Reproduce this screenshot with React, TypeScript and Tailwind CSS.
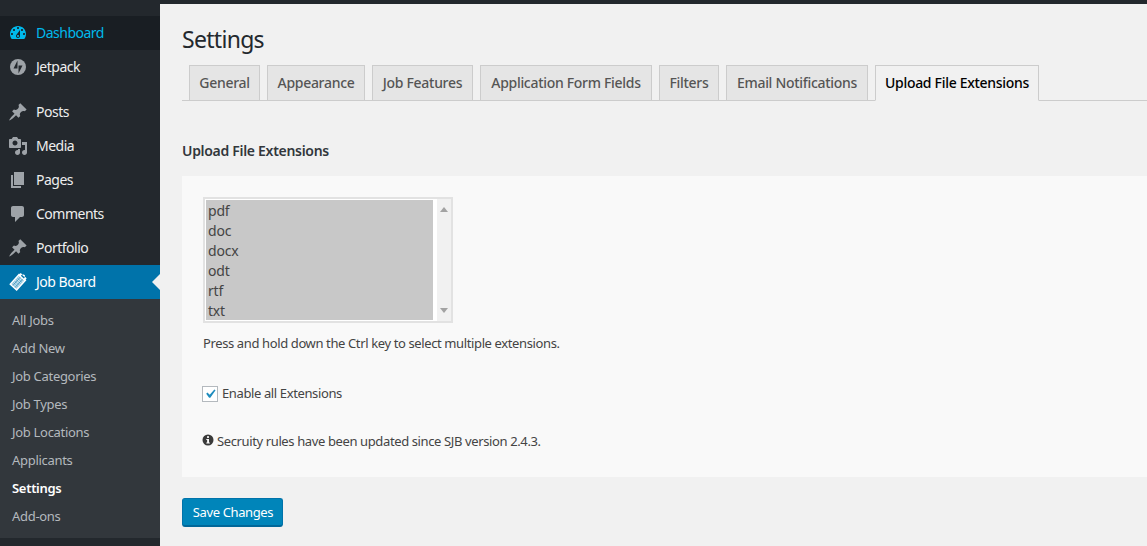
import type { ReactNode } from "react";

const Dash = ({ d, className = "" }: { d: string; className?: string }) => (
  <svg viewBox="0 0 20 20" className={`w-5 h-5 fill-current ${className}`}>
    <path d={d} fillRule="evenodd" />
  </svg>
);

const pinPath =
  "M10.44 3.02l1.82-1.82 6.36 6.35-1.83 1.82c-1.05-.68-2.48-.57-3.41.36l-.75.75c-.92.93-1.04 2.35-.35 3.41l-1.83 1.82-2.41-2.41-2.8 2.79c-.42.42-3.38 2.71-3.8 2.29s1.86-3.39 2.28-3.81l2.79-2.79L4.1 9.36l1.83-1.82c1.05.69 2.48.57 3.4-.36l.75-.75c.93-.92 1.05-2.35.36-3.41z";
const dashPath =
  "M3.76 16h12.48c1.1-1.37 1.76-3.11 1.76-5 0-4.42-3.58-8-8-8s-8 3.58-8 8c0 1.89.66 3.63 1.76 5zM10 4c.55 0 1 .45 1 1s-.45 1-1 1-1-.45-1-1 .45-1 1-1zM6 6c.55 0 1 .45 1 1s-.45 1-1 1-1-.45-1-1 .45-1 1-1zm8 0c.55 0 1 .45 1 1s-.45 1-1 1-1-.45-1-1 .45-1 1-1zm-5.37 5.55L12 7v6c0 1.1-.9 2-2 2s-2-.9-2-2c0-.57.24-1.08.63-1.45zM4 10c.55 0 1 .45 1 1s-.45 1-1 1-1-.45-1-1 .45-1 1-1zm12 0c.55 0 1 .45 1 1s-.45 1-1 1-1-.45-1-1 .45-1 1-1zm-5 3c0-.55-.45-1-1-1s-1 .45-1 1 .45 1 1 1 1-.45 1-1z";
const mediaPath =
  "M13 11V4c0-.55-.45-1-1-1h-1.67L9 1H5L3.67 3H2c-.55 0-1 .45-1 1v7c0 .55.45 1 1 1h10c.55 0 1-.45 1-1zM7 4.5c1.38 0 2.5 1.12 2.5 2.5S8.38 9.5 7 9.5 4.5 8.38 4.5 7 5.62 4.5 7 4.5zM14 6h5v10.5c0 1.38-1.12 2.5-2.5 2.5S14 17.88 14 16.5s1.12-2.5 2.5-2.5c.17 0 .34.02.5.05V9h-3V6zm-4 8.05V13h2v3.5c0 1.38-1.12 2.5-2.5 2.5S7 17.88 7 16.5 8.12 14 9.5 14c.17 0 .34.02.5.05z";
const pagesPath = "M6 15V2h10v13H6zm-1 1h8v2H3V5h2v11z";
const commentsPath =
  "M5 2h9c1.1 0 2 .9 2 2v7c0 1.1-.9 2-2 2h-2l-5 5v-5H5c-1.1 0-2-.9-2-2V4c0-1.1.9-2 2-2z";

const JetpackIcon = () => (
  <svg viewBox="0 0 32 32" className="w-4 h-4 ml-0.5">
    <circle cx="16" cy="16" r="16" fill="#9ea3a8" />
    <path d="M15 19H7l8-16v16z" fill="#23282d" />
    <path d="M17 29V13h8l-8 16z" fill="#23282d" />
  </svg>
);

const TagIcon = () => (
  <svg viewBox="0 0 20 20" className="w-5 h-5">
    <g transform="rotate(42 10 10)">
      <path d="M6 1.500h3v-1h2v1h3v1.500h1v14.500H5V3h1z" fill="#fff" />
      <rect x="6.500" y="5" width="7" height="11" fill="#8cc3dc" />
      <path d="M6.500 6.500h7M6.500 8.500h7M6.500 10.500h7M6.500 12.500h7M6.500 14.500h7" stroke="#fff" strokeWidth="0.6" />
      <path d="M8.500 5v11M11.500 5v11" stroke="#0073aa" strokeWidth="0.5" />
      <rect x="8" y="2" width="4" height="1.500" fill="#0073aa" />
    </g>
  </svg>
);

function MenuItem({
  icon,
  label,
  className = "text-[#eee]",
  children,
}: {
  icon: ReactNode;
  label: string;
  className?: string;
  children?: ReactNode;
}) {
  return (
    <div className={`relative h-[34px] flex items-center text-sm ${className}`}>
      <div className="w-9 pl-2 shrink-0 flex items-center">{icon}</div>
      <span className="tracking-[-0.5px]">{label}</span>
      {children}
    </div>
  );
}

const subItems = ["All Jobs", "Add New", "Job Categories", "Job Types", "Job Locations", "Applicants", "Settings", "Add-ons"];

function Sidebar() {
  return (
    <aside className="w-40 shrink-0 bg-[#23282d] pt-4 h-[546px]">
      <MenuItem icon={<Dash d={dashPath} />} label="Dashboard" className="bg-[#191e23] text-[#00b9eb]" />
      <MenuItem icon={<JetpackIcon />} label="Jetpack" />
      <div className="h-[11px]" />
      <MenuItem icon={<Dash d={pinPath} className="text-[#9ea3a8]" />} label="Posts" />
      <MenuItem icon={<Dash d={mediaPath} className="text-[#9ea3a8]" />} label="Media" />
      <MenuItem icon={<Dash d={pagesPath} className="text-[#9ea3a8]" />} label="Pages" />
      <MenuItem icon={<Dash d={commentsPath} className="text-[#9ea3a8]" />} label="Comments" />
      <MenuItem icon={<Dash d={pinPath} className="text-[#9ea3a8]" />} label="Portfolio" />
      <MenuItem icon={<TagIcon />} label="Job Board" className="bg-[#0073aa] text-white">
        <span className="absolute right-0 top-[9px] border-y-8 border-r-8 border-y-transparent border-r-[#f1f1f1]" />
      </MenuItem>
      <ul className="bg-[#32373c] pt-2 pb-[7px]">
        {subItems.map((s) => (
          <li
            key={s}
            className={`h-7 flex items-center pl-3 text-[13px] tracking-[-0.3px] ${
              s === "Settings" ? "font-semibold text-white" : "text-[#b4b9be]"
            }`}
          >
            {s}
          </li>
        ))}
      </ul>
    </aside>
  );
}

const tabs = [
  { label: "General", w: "w-[71px]" },
  { label: "Appearance", w: "w-[98px]" },
  { label: "Job Features", w: "w-[101px]" },
  { label: "Application Form Fields", w: "w-[172px]" },
  { label: "Filters", w: "w-[60px]" },
  { label: "Email Notifications", w: "w-[142px]" },
];

function Tabs() {
  return (
    <div className="mt-2.5 flex gap-[7px] pl-[7px] h-9 border-b border-[#ccc]">
      {tabs.map((t) => (
        <div
          key={t.label}
          className={`${t.w} h-9 flex items-center justify-center bg-[#e5e5e5] border border-[#ccc] text-sm font-medium text-[#555] tracking-[-0.3px] whitespace-nowrap`}
        >
          {t.label}
        </div>
      ))}
      <div className="w-[164px] h-9 flex items-center justify-center bg-[#f1f1f1] border border-[#ccc] border-b-[#f1f1f1] text-sm font-medium text-black tracking-[-0.3px] whitespace-nowrap">
        Upload File Extensions
      </div>
    </div>
  );
}

function ExtensionSelect() {
  return (
    <div className="w-[250px] h-[126px] border-2 border-[#e2e2e2] bg-white flex">
      <div className="w-[230px] pt-px pl-px">
        <div className="w-[227px] bg-[#c8c8c8] text-sm text-[#444] tracking-[-0.2px]">
          {["pdf", "doc", "docx", "odt", "rtf", "txt"].map((x) => (
            <div key={x} className="h-5 leading-[21px] pl-0.5">
              {x}
            </div>
          ))}
        </div>
      </div>
      <div className="flex-1 bg-[#f1f1f1] flex flex-col items-center justify-between py-2 ml-0.5">
        <span className="border-x-4 border-b-[5px] border-x-transparent border-b-[#a3a3a3]" />
        <span className="border-x-4 border-t-[5px] border-x-transparent border-t-[#a3a3a3]" />
      </div>
    </div>
  );
}

export default function App() {
  return (
    <div className="flex w-[1147px] h-[546px] overflow-hidden bg-[#f1f1f1] font-['Noto_Sans',sans-serif]">
      <Sidebar />
      <main className="flex-1 min-w-0">
        <div className="h-1 bg-[#23282d]" />
        <div className="pl-[22px]">
          <h1 className="mt-[19px] h-[32px] leading-[32px] text-[23px] text-[#23282d] tracking-[-0.7px]">Settings</h1>
          <Tabs />
          <h2 className="mt-10 h-5 leading-5 text-sm font-semibold text-[#32373c] tracking-[-0.3px]">Upload File Extensions</h2>
          <section className="mt-[15px] h-[301px] bg-[#f9f9f9] pl-[21px] pt-[21px]">
            <ExtensionSelect />
            <p className="mt-2.5 h-5 leading-5 text-[13px] text-[#444] tracking-[-0.38px]">
              Press and hold down the Ctrl key to select multiple extensions.
            </p>
            <label className="mt-[33px] -ml-px h-4 flex items-center gap-1 text-[13px] text-[#444] tracking-[-0.38px]">
              <span className="w-4 h-4 bg-white border border-[#b4b9be] flex items-center justify-center">
                <svg viewBox="0 0 20 20" className="w-[18px] h-[18px] shrink-0 fill-[#1e8cbe]">
                  <path d="M14.83 4.89l1.34.94-5.81 8.38H9.02L5.78 9.67l1.34-1.25 2.57 2.4z" />
                </svg>
              </span>
              Enable all Extensions
            </label>
            <p className="mt-[30px] -ml-px h-5 flex items-center gap-[3px] text-[13px] text-[#444] tracking-[-0.38px]">
              <svg viewBox="0 0 12 12" className="w-3 h-3 -mt-1 shrink-0">
                <circle cx="6" cy="6" r="5.500" fill="#3a3a3a" />
                <rect x="5" y="2.200" width="2" height="1.700" fill="#f9f9f9" />
                <path d="M4.300 4.900h2.700v3.500h.8v1H4.300v-1h.8V5.900h-.8z" fill="#f9f9f9" />
              </svg>
              Secruity rules have been updated since SJB version 2.4.3.
            </p>
          </section>
          <button className="mt-[21px] w-[101px] h-[29px] pt-px pl-px rounded-[3px] bg-[#0085ba] border border-[#0073aa] border-b-2 border-b-[#006799] text-white text-[13px] tracking-[-0.38px]">
            Save Changes
          </button>
        </div>
      </main>
    </div>
  );
}
